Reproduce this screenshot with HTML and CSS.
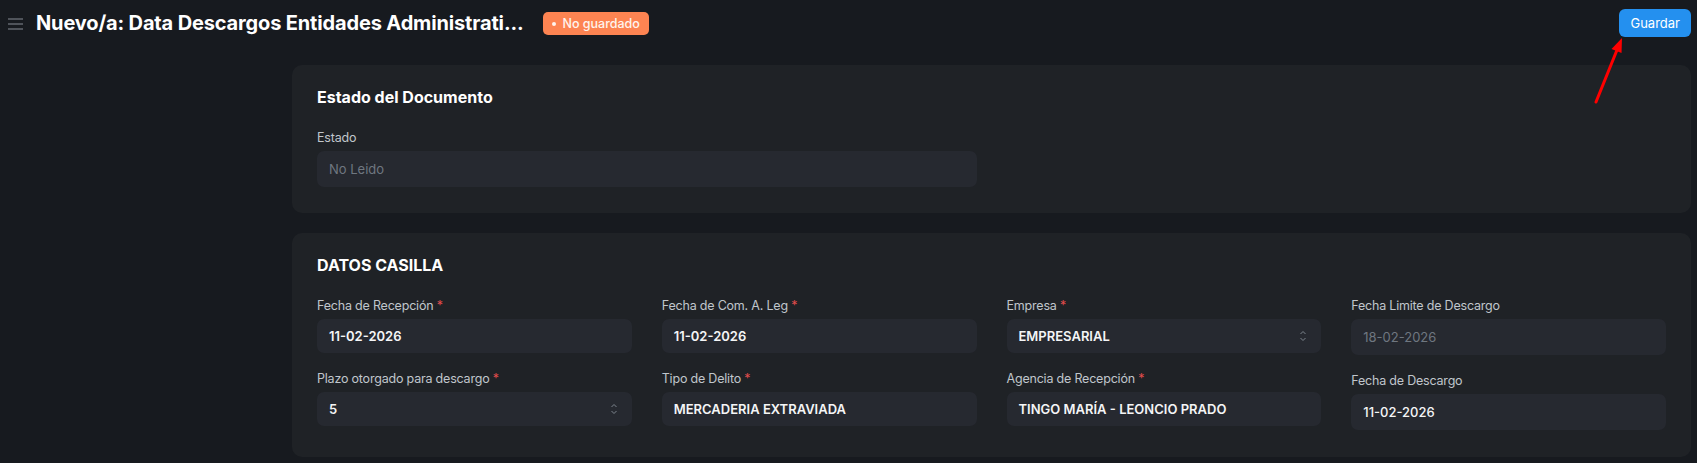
FILE: index.html
```html
<!DOCTYPE html>
<html>
  <head>
    <title>Nuevo/a: Data Descargos Entidades Administrativas</title>
    <link rel="stylesheet" href="styles.css">
  </head>
  <body>
    <header class="page-head">
      <div class="head-left">
        <span class="menu-icon">
          <svg width="15" height="12" viewBox="0 0 15 12">
            <path d="M0 1h15M0 6h15M0 11h15" stroke="#4f535a" stroke-width="1.8" />
          </svg>
        </span>
        <h1 class="title">Nuevo/a: Data Descargos Entidades Administrati...</h1>
        <span class="pill"><span class="dot"></span>No guardado</span>
      </div>
      <button class="btn-primary">Guardar</button>
    </header>

    <div class="layout">
      <aside class="sidebar"></aside>
      <main class="form">
        <section class="card">
          <h2>Estado del Documento</h2>
          <div class="grid cols-2">
            <div class="col">
              <div class="field">
                <label>Estado</label>
                <div class="input tall muted">No Leido</div>
              </div>
            </div>
            <div class="col"></div>
          </div>
        </section>

        <section class="card">
          <h2>DATOS CASILLA</h2>
          <div class="grid cols-4">
            <div class="col">
              <div class="field">
                <label>Fecha de Recepción <span class="req">*</span></label>
                <div class="input">11-02-2026</div>
              </div>
              <div class="field">
                <label>Plazo otorgado para descargo <span class="req">*</span></label>
                <div class="input">5
                  <svg class="spin" width="8" height="14" viewBox="0 0 8 14">
                    <path d="M1.5 5L4 2.5L6.5 5M1.5 9L4 11.5L6.5 9" fill="none" stroke="#7d858e" stroke-width="1" />
                  </svg>
                </div>
              </div>
            </div>
            <div class="col">
              <div class="field">
                <label>Fecha de Com. A. Leg <span class="req">*</span></label>
                <div class="input">11-02-2026</div>
              </div>
              <div class="field">
                <label>Tipo de Delito <span class="req">*</span></label>
                <div class="input">MERCADERIA EXTRAVIADA</div>
              </div>
            </div>
            <div class="col">
              <div class="field">
                <label>Empresa <span class="req">*</span></label>
                <div class="input">EMPRESARIAL
                  <svg class="spin" width="8" height="14" viewBox="0 0 8 14">
                    <path d="M1.5 5L4 2.5L6.5 5M1.5 9L4 11.5L6.5 9" fill="none" stroke="#7d858e" stroke-width="1" />
                  </svg>
                </div>
              </div>
              <div class="field">
                <label>Agencia de Recepción <span class="req">*</span></label>
                <div class="input">TINGO MARÍA - LEONCIO PRADO</div>
              </div>
            </div>
            <div class="col">
              <div class="field">
                <label>Fecha Limite de Descargo</label>
                <div class="input tall muted">18-02-2026</div>
              </div>
              <div class="field">
                <label>Fecha de Descargo</label>
                <div class="input tall light">11-02-2026</div>
              </div>
            </div>
          </div>
        </section>
      </main>
    </div>

    <svg class="annotation" width="1697" height="463" viewBox="0 0 1697 463">
      <line x1="1596" y1="102" x2="1617" y2="50" stroke="#ff0000" stroke-width="3" stroke-linecap="round" />
      <polygon points="1622,38 1621.5,53 1611.5,49" fill="#ff0000" />
    </svg>
  </body>
</html>
```

FILE: styles.css
```css
body {
  margin: 0;
  background-color: #171a1f;
  color: #f0f2f4;
  font-family: "Inter", "Noto Sans", sans-serif;
  font-size: 13px;
}

.page-head {
  height: 46px;
  padding: 0 6px 0 8px;
  display: flex;
  align-items: center;
  justify-content: space-between;
}

.head-left {
  display: flex;
  align-items: center;
}

.menu-icon {
  display: flex;
  margin-top: 2px;
}

.title {
  margin: 0 20px 0 13px;
  font-size: 20px;
  font-weight: 700;
  letter-spacing: -0.15px;
  color: #ffffff;
}

.pill {
  display: flex;
  align-items: center;
  gap: 6px;
  height: 23px;
  padding: 0 9px;
  margin-top: 1px;
  border-radius: 5px;
  background-color: #fd8452;
  color: #fff4ee;
  font-size: 12.5px;
  font-weight: 500;

  .dot {
    width: 4px;
    height: 4px;
    border-radius: 50%;
    background-color: #fff4ee;
  }
}

.btn-primary {
  height: 28px;
  padding: 0 11px;
  border: none;
  border-radius: 6px;
  background-color: #2490ef;
  color: #ffffff;
  font-family: inherit;
  font-size: 13px;
  font-weight: 400;
}

.layout {
  display: flex;
  padding: 19px 6px 0 8px;
}

.sidebar {
  width: 284px;
  flex-shrink: 0;
}

.form {
  flex: 1;
  display: flex;
  flex-direction: column;
  gap: 20px;
}

.card {
  background-color: #1f2226;
  border-radius: 10px;
  padding: 22px 25px 26px;

  &:last-child {
    padding-bottom: 27px;
  }

  h2 {
    margin: 0 0 19px;
    font-size: 16px;
    line-height: 21px;
    font-weight: 700;
    color: #ffffff;
  }
}

.grid {
  display: grid;
  column-gap: 30px;

  &.cols-2 {
    grid-template-columns: 1fr 1fr;
  }

  &.cols-4 {
    grid-template-columns: repeat(4, 1fr);
  }
}

.col {
  display: flex;
  flex-direction: column;
  gap: 15px;
}

.field {
  display: flex;
  flex-direction: column;
  gap: 4px;

  label {
    padding-top: 2px;
    font-size: 12.5px;
    line-height: 18px;
    letter-spacing: -0.2px;
    color: #c0c6cc;
  }

  .req {
    color: #e24c4c;
  }
}

.input {
  height: 34px;
  padding: 0 12px;
  display: flex;
  align-items: center;
  justify-content: space-between;
  border-radius: 7px;
  background-color: #262930;
  color: #f4f5f6;
  font-size: 13px;
  font-weight: 600;

  &.tall {
    height: 36px;
  }

  &.muted {
    color: #6f7780;
    font-weight: 400;
  }

  &.light {
    font-weight: 500;
  }

  .spin {
    margin-right: 2px;
  }
}

.annotation {
  position: absolute;
  left: 0;
  top: 0;
  pointer-events: none;
}
```
